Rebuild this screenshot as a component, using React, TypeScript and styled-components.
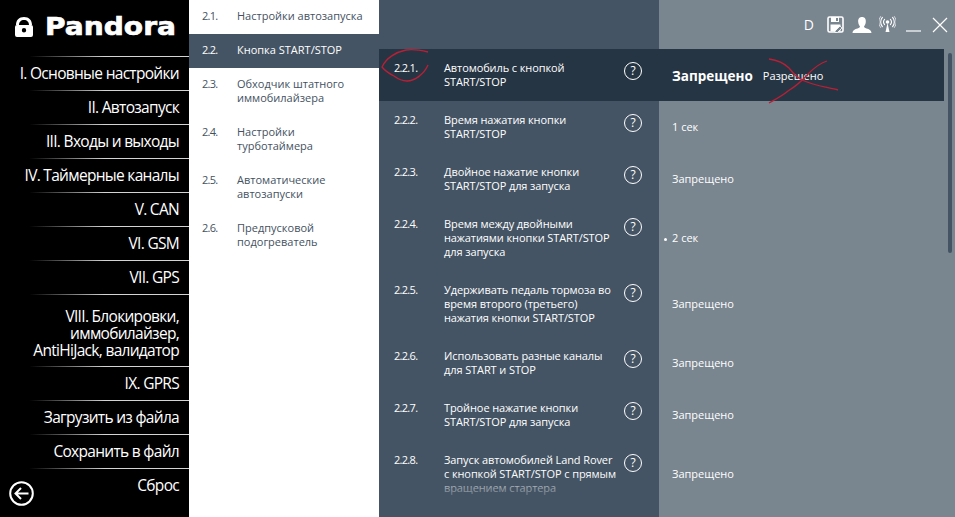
import React from 'react';
import styled, { createGlobalStyle } from 'styled-components';

const GlobalStyle = createGlobalStyle`
  html, body {
    margin: 0;
    padding: 0;
    height: 517px;
    overflow: hidden;
    background: #000;
    font-family: 'Open Sans', 'Noto Sans', sans-serif;
  }
`;

const menu = [
  'I. Основные настройки',
  'II. Автозапуск',
  'III. Входы и выходы',
  'IV. Таймерные каналы',
  'V. CAN',
  'VI. GSM',
  'VII. GPS',
  'VIII. Блокировки,\nиммобилайзер,\nAntiHiJack, валидатор',
  'IX. GPRS',
  'Загрузить из файла',
  'Сохранить в файл',
];

const sections = [
  { num: '2.1.', title: 'Настройки автозапуска' },
  { num: '2.2.', title: 'Кнопка START/STOP', active: true },
  { num: '2.3.', title: 'Обходчик штатного\nиммобилайзера' },
  { num: '2.4.', title: 'Настройки\nтурботаймера' },
  { num: '2.5.', title: 'Автоматические\nавтозапуски' },
  { num: '2.6.', title: 'Предпусковой\nподогреватель' },
];

const params = [
  { num: '2.2.1.', title: 'Автомобиль с кнопкой\nSTART/STOP', value: 'Запрещено', alt: 'Разрешено', active: true },
  { num: '2.2.2.', title: 'Время нажатия кнопки\nSTART/STOP', value: '1 сек' },
  { num: '2.2.3.', title: 'Двойное нажатие кнопки\nSTART/STOP для запуска', value: 'Запрещено' },
  { num: '2.2.4.', title: 'Время между двойными\nнажатиями кнопки START/STOP\nдля запуска', value: '2 сек', marked: true },
  { num: '2.2.5.', title: 'Удерживать педаль тормоза во\nвремя второго (третьего)\nнажатия кнопки START/STOP', value: 'Запрещено' },
  { num: '2.2.6.', title: 'Использовать разные каналы\nдля START и STOP', value: 'Запрещено' },
  { num: '2.2.7.', title: 'Тройное нажатие кнопки\nSTART/STOP для запуска', value: 'Запрещено' },
  { num: '2.2.8.', title: 'Запуск автомобилей Land Rover\nс кнопкой START/STOP с прямым\nвращением стартера', value: 'Запрещено' },
];

const Page = styled.div`
  position: relative;
  display: grid;
  grid-template-columns: 189px 190px 576px;
  width: 955px;
  height: 517px;
  overflow: hidden;
`;

const Sidebar = styled.nav`
  display: flex;
  flex-direction: column;
  background: #000;
  color: #fff;
`;

const Logo = styled.div`
  display: flex;
  align-items: center;
  gap: 12px;
  height: 56px;
  padding: 0 0 3px 15px;
  box-sizing: border-box;
`;

const LogoText = styled.span`
  font-family: 'DejaVu Sans', sans-serif;
  font-weight: 700;
  font-size: 24px;
  line-height: 1;
  -webkit-text-stroke: 0.6px #fff;
  transform: scaleX(1.17);
  transform-origin: left center;
`;

const MenuItem = styled.a<{ $multi?: boolean }>`
  display: block;
  padding: ${(p) => (p.$multi ? '13px 10px 7px 0' : '8px 10px 8px 0')};
  font-size: 15.5px;
  line-height: 17px;
  letter-spacing: -0.7px;
  text-align: right;
  white-space: pre-line;
  border-top: 1px solid transparent;
  border-image: linear-gradient(to right, #000 30px, #d4d4d4 105px) 1;
`;

const MenuFooter = styled(MenuItem)`
  display: flex;
  justify-content: space-between;
  padding-left: 9px;

  svg {
    margin-top: 4px;
  }
`;

const SubNav = styled.nav`
  background: #fff;
`;

const SubItem = styled.a<{ $active?: boolean; $tall?: boolean }>`
  display: grid;
  grid-template-columns: 35px 1fr;
  padding: 9px 0 0 13px;
  height: ${(p) => (p.$tall ? '48px' : '34px')};
  box-sizing: border-box;
  font-size: 11px;
  line-height: 14px;
  background: ${(p) => (p.$active ? '#445464' : '#fff')};
  color: ${(p) => (p.$active ? '#fff' : '#44525f')};
  white-space: pre-line;
`;

const SubNum = styled.span`
  letter-spacing: -0.7px;
`;

const Main = styled.main`
  position: relative;
  background: linear-gradient(to right, #445464 280px, #79858f 280px);
  color: #fff;
`;

const Toolbar = styled.header`
  display: flex;
  justify-content: flex-end;
  align-items: center;
  height: 49px;
  padding-right: 7px;
  box-sizing: border-box;
`;

const Tool = styled.span<{ $gap: number }>`
  display: flex;
  margin-left: ${(p) => p.$gap}px;
`;

const ToolLetter = styled.span`
  font-size: 14px;
  line-height: 16px;
`;

const ParamRow = styled.div<{ $active?: boolean }>`
  display: grid;
  grid-template-columns: 50px 180px 48px 1fr;
  width: 565px;
  padding: 12px 0 12px 15px;
  box-sizing: border-box;
  font-size: 11px;
  line-height: 14px;
  background: ${(p) => (p.$active ? '#263544' : 'transparent')};
`;

const ParamNum = styled.span`
  letter-spacing: -0.7px;
`;

const ParamTitle = styled.span`
  white-space: pre-line;
  letter-spacing: -0.1px;
`;

const HelpIcon = styled.span`
  display: flex;
  align-items: center;
  justify-content: center;
  width: 16px;
  height: 16px;
  margin-top: 1px;
  border: 1px solid #fff;
  border-radius: 50%;
  font-size: 12px;
  line-height: 1;
`;

const Value = styled.span<{ $marked?: boolean; $active?: boolean }>`
  position: relative;
  display: flex;
  align-items: center;
  gap: 10px;
  padding-top: ${(p) => (p.$active ? '2px' : '0')};
  ${(p) =>
    p.$marked &&
    `&::before {
      content: '';
      position: absolute;
      left: -8px;
      top: 50%;
      width: 3px;
      height: 3px;
      border-radius: 50%;
      background: #fff;
    }`}
`;

const ValueStrong = styled.b`
  font-size: 13.5px;
  font-weight: 700;
`;

const FadeOut = styled.div`
  position: absolute;
  left: 0;
  width: 280px;
  bottom: 0;
  height: 42px;
  background: linear-gradient(
    to bottom,
    rgba(68, 84, 100, 0) 0,
    rgba(68, 84, 100, 0.55) 13px,
    #445464 28px
  );
  pointer-events: none;
`;

const ScrollThumb = styled.div`
  position: absolute;
  right: 3px;
  top: 53px;
  width: 4px;
  height: 200px;
  border-radius: 2px;
  background: #445464;
`;

const Scribble = styled.svg`
  position: absolute;
  left: 0;
  top: 0;
  pointer-events: none;
`;

const SaveGlyph = () => (
  <svg width="17" height="17" viewBox="0 0 17 17" fill="none">
    <path d="M1 2.5 A1.5 1.5 0 0 1 2.5 1 H14.5 A1.5 1.5 0 0 1 16 2.5 V14.5 A1.5 1.5 0 0 1 14.5 16 H2.5 A1.5 1.5 0 0 1 1 14.5 Z" stroke="#fff" strokeWidth="1.6" />
    <rect x="4" y="1" width="8" height="5" fill="#fff" />
    <rect x="9" y="2" width="2" height="3" fill="#79858f" />
    <rect x="3.5" y="8.5" width="10" height="7" fill="#fff" />
    <path d="M8 15 L13 10 L15 12 L10.5 16.5 L8 16.5 Z" fill="#79858f" stroke="#fff" strokeWidth="0.8" />
  </svg>
);

const UserGlyph = () => (
  <svg width="20" height="16" viewBox="0 0 19 16" fill="#fff">
    <path d="M9.5 0 C12.5 0 13.6 2.2 13.3 5 C13.1 7 12.4 8.4 11.6 9.3 C11.4 10.4 12.2 11 14 11.6 C16.6 12.4 18.6 13 19 16 H0 C0.4 13 2.4 12.4 5 11.6 C6.8 11 7.6 10.4 7.4 9.3 C6.6 8.4 5.9 7 5.7 5 C5.4 2.2 6.5 0 9.5 0 Z" />
  </svg>
);

const AntennaGlyph = () => (
  <svg width="17" height="17" viewBox="0 0 17 17" fill="none" stroke="#fff" strokeWidth="1.1" strokeLinecap="round">
    <circle cx="8.5" cy="6" r="1.8" fill="#fff" stroke="none" />
    <path d="M8.5 7 L6.5 16 H10.5 Z" fill="#fff" stroke="none" />
    <path d="M5.6 3.4 A4 4 0 0 0 5.6 8.6" />
    <path d="M11.4 3.4 A4 4 0 0 1 11.4 8.6" />
    <path d="M3.4 1.4 A7 7 0 0 0 3.4 10.6" />
    <path d="M13.6 1.4 A7 7 0 0 1 13.6 10.6" />
    <path d="M1.6 0.5 A9.5 9.5 0 0 0 1.6 11.5" strokeWidth="0.7" />
    <path d="M15.4 0.5 A9.5 9.5 0 0 1 15.4 11.5" strokeWidth="0.7" />
  </svg>
);

const MinimizeGlyph = () => (
  <svg width="15" height="15" viewBox="0 0 15 15" fill="none" stroke="#fff" strokeWidth="1.2">
    <path d="M0 14 H15" />
  </svg>
);

const CloseGlyph = () => (
  <svg width="16" height="16" viewBox="0 0 16 16" fill="none" stroke="#fff" strokeWidth="1.2">
    <path d="M1 1 L15 15 M15 1 L1 15" />
  </svg>
);

const LockGlyph = () => (
  <svg width="18" height="20" viewBox="0 0 18 20" fill="#fff">
    <path d="M9 0 C14 0 17 3 17 8 H14 C14 5 12 3 9 3 C6 3 4 5 4 8 H1 C1 3 4 0 9 0 Z" />
    <path fillRule="evenodd" d="M2 8 H16 Q18 8 18 10 V18 Q18 20 16 20 H2 Q0 20 0 18 V10 Q0 8 2 8 Z M9 11 A2.2 2.2 0 0 0 9 15.4 A2.2 2.2 0 0 0 9 11 Z" />
  </svg>
);

const BackGlyph = () => (
  <svg width="25" height="25" viewBox="0 0 25 25" fill="none" stroke="#fff" strokeWidth="2">
    <circle cx="12.5" cy="12.5" r="11.3" />
    <path d="M19.5 12.5 H6.5 M12 7 L6.5 12.5 L12 18" />
  </svg>
);

export default function App() {
  return (
    <Page>
      <GlobalStyle />
      <Sidebar>
        <Logo>
          <LockGlyph />
          <LogoText>Pandora</LogoText>
        </Logo>
        {menu.map((item) => (
          <MenuItem key={item} $multi={item.includes('\n')}>
            {item}
          </MenuItem>
        ))}
        <MenuFooter>
          <BackGlyph />
          <span>Сброс</span>
        </MenuFooter>
      </Sidebar>
      <SubNav>
        {sections.map((s) => (
          <SubItem key={s.num} $active={s.active} $tall={s.title.includes('\n')}>
            <SubNum>{s.num}</SubNum>
            <span>{s.title}</span>
          </SubItem>
        ))}
      </SubNav>
      <Main>
        <Toolbar>
          <ToolLetter>D</ToolLetter>
          <Tool $gap={13}>
            <SaveGlyph />
          </Tool>
          <Tool $gap={8}>
            <UserGlyph />
          </Tool>
          <Tool $gap={7}>
            <AntennaGlyph />
          </Tool>
          <Tool $gap={10}>
            <MinimizeGlyph />
          </Tool>
          <Tool $gap={11}>
            <CloseGlyph />
          </Tool>
        </Toolbar>
        {params.map((p) => (
          <ParamRow key={p.num} $active={p.active}>
            <ParamNum>{p.num}</ParamNum>
            <ParamTitle>{p.title}</ParamTitle>
            <HelpIcon>?</HelpIcon>
            <Value $marked={p.marked} $active={p.active}>
              {p.active ? <ValueStrong>{p.value}</ValueStrong> : p.value}
              {p.alt && <span>{p.alt}</span>}
            </Value>
          </ParamRow>
        ))}
        <FadeOut />
        <ScrollThumb />
      </Main>
      <Scribble width="955" height="517" viewBox="0 0 955 517" fill="none" stroke="#bb1f35" strokeWidth="1.3">
        <path d="M428 52 C420 50 412 49 406 50 C396 52 386 58 382 67 C386 72 390 74 394 76 C398 79 402 81 407 81 C415 81 424 74 428 65" />
        <path d="M769 59 C776 60 784 63 789 68 C793 73 796 77 802 80 C812 85 826 87 838 90" />
        <path d="M827 61 C820 63 814 68 808 74 C802 81 796 86 788 91 C782 96 776 99 769 103" />
      </Scribble>
    </Page>
  );
}
